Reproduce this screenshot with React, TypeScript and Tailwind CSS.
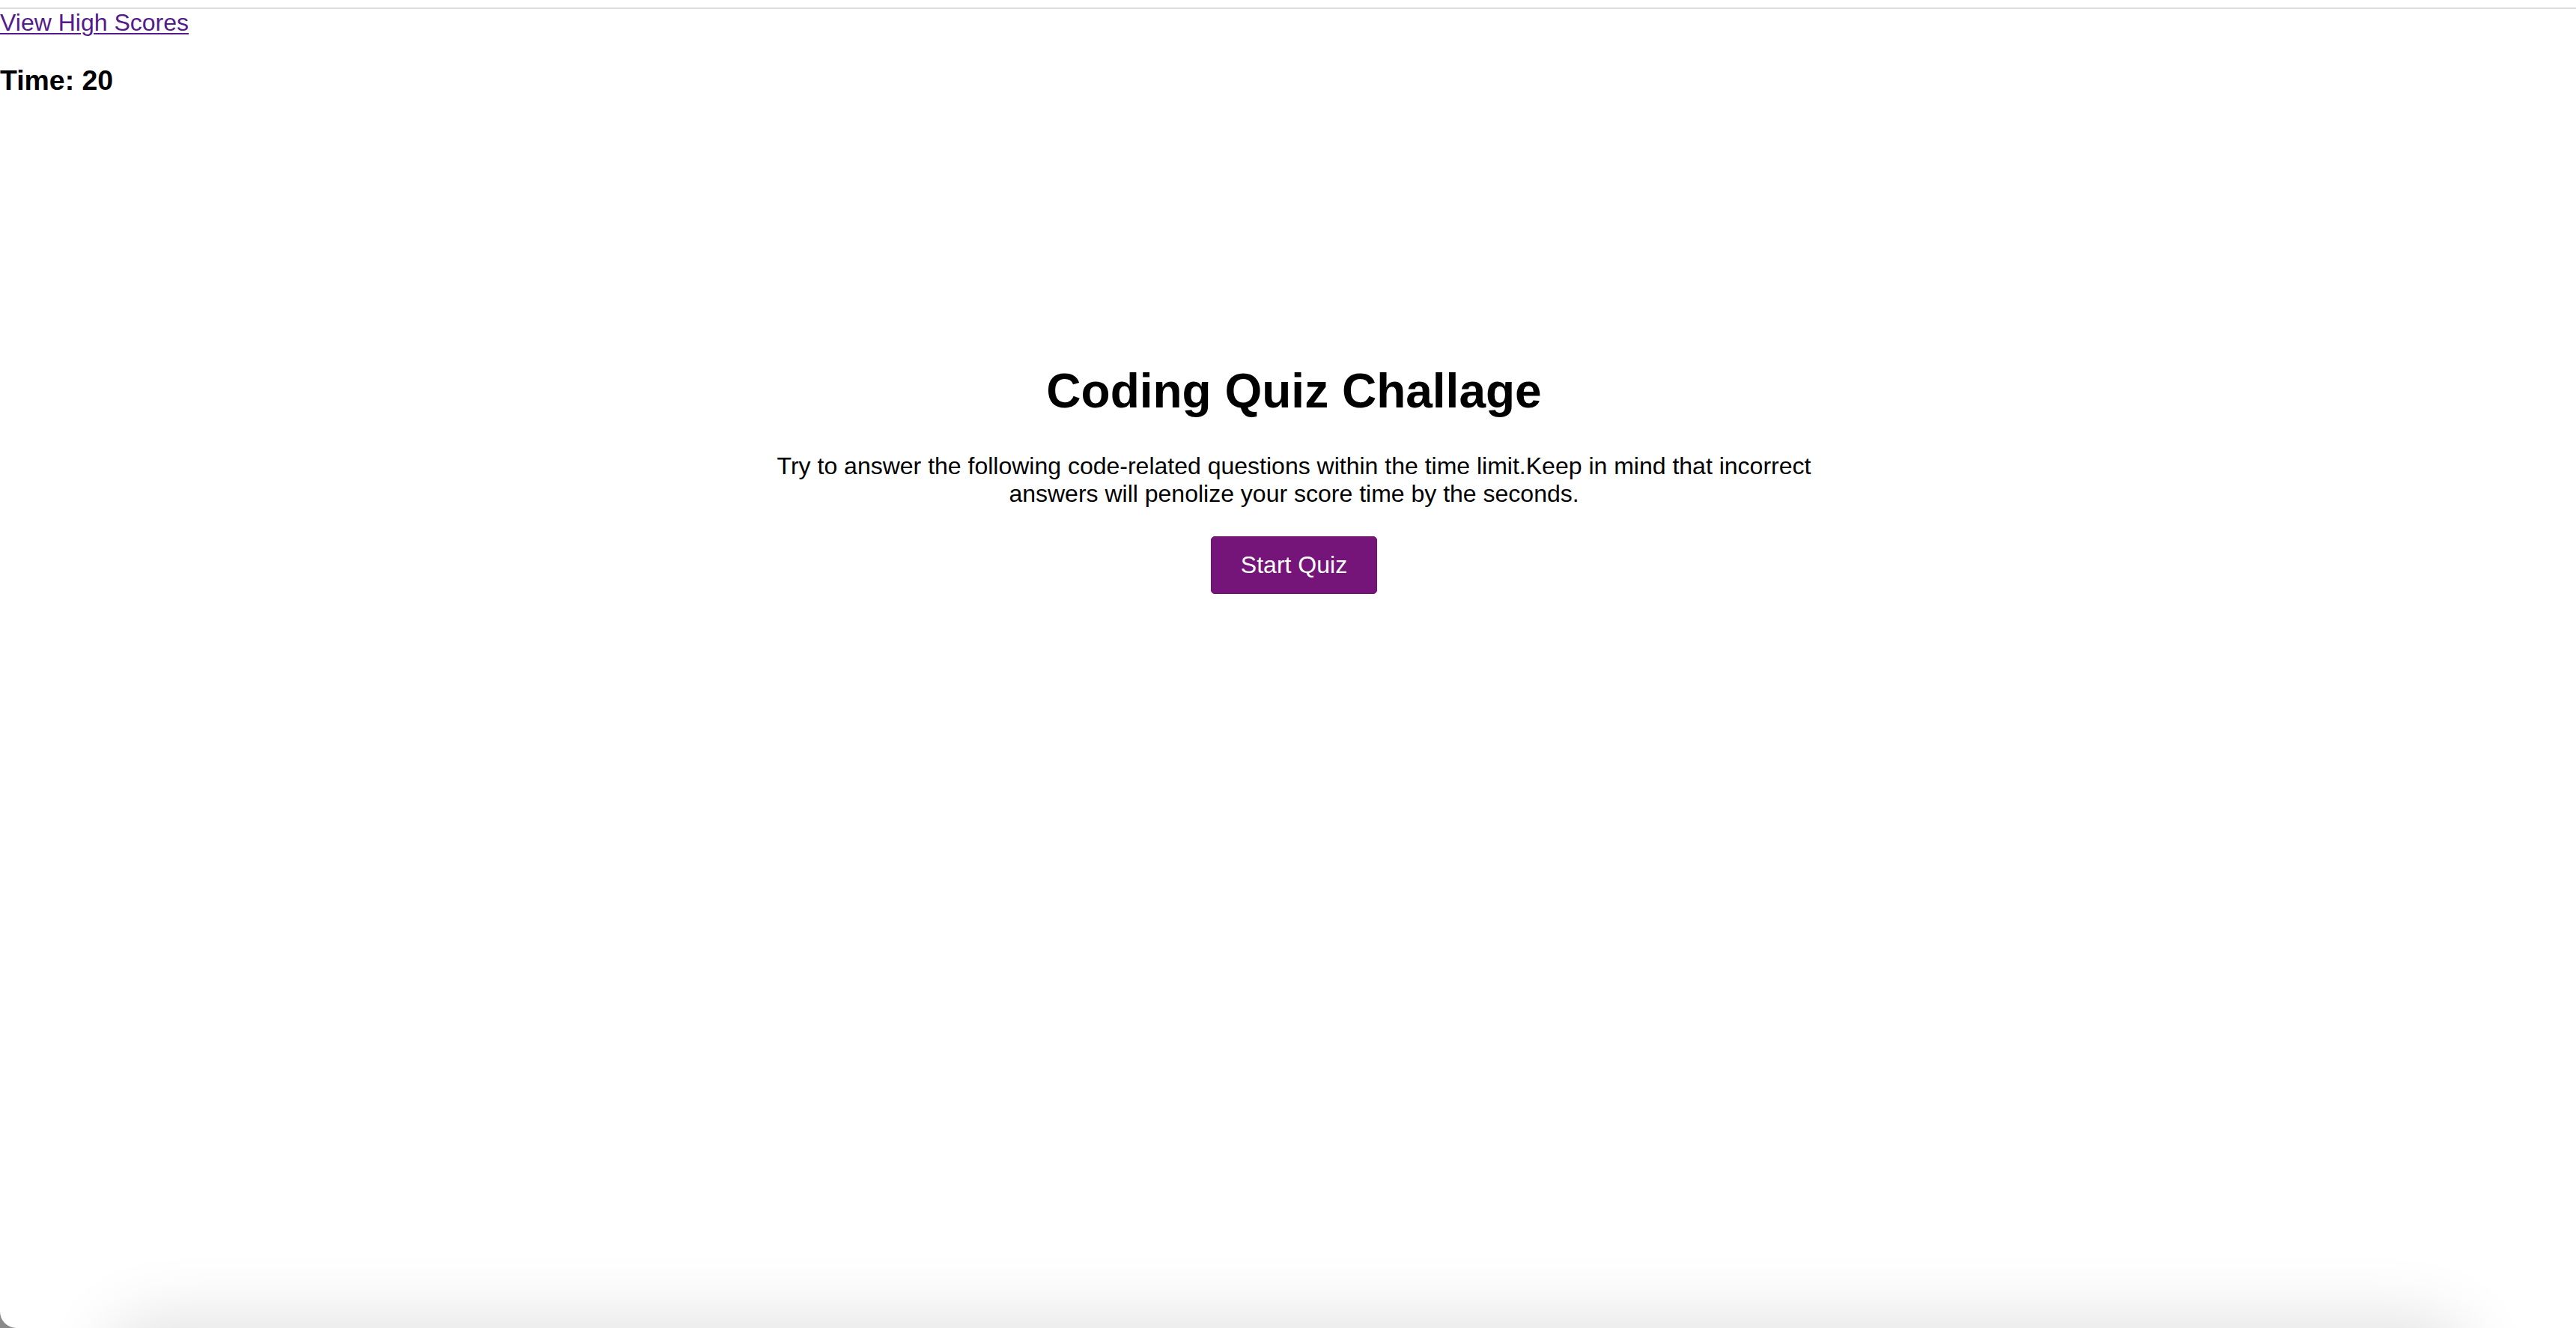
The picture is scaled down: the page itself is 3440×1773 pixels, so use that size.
export default function App() {
  return (
    <div className="relative h-[1773px] overflow-hidden bg-[#8a8a8a] font-['Liberation_Sans',Arial,sans-serif] text-black">
      <div className="h-full rounded-bl-[22px] bg-white">
        <div className="h-[10px] bg-white" />
        <div className="h-[2px] bg-[#dcdcdc]" />

        <header className="flex flex-col items-start">
          <a href="#" className="text-[32px] leading-[37px] text-[#551a8b] underline decoration-2 underline-offset-[3px]">
            View High Scores
          </a>
          <h3 className="my-[37px] text-[37.44px] font-bold leading-[43px]">Time: 20</h3>
        </header>

        <main className="flex justify-center pl-4 pt-[319px]">
          <div className="flex w-[1440px] flex-col items-center text-center">
            <h1 className="text-[64px] font-bold leading-[74px]">Coding Quiz Challage</h1>
            <p className="mt-[45px] text-[32px] leading-[37px]">
              Try to answer the following code-related questions within the time limit.Keep in mind that incorrect answers will penolize your score time by the seconds.
            </p>
            <button className="mt-[38px] h-[77px] w-[222px] rounded-[5px] border border-[#6e1172] bg-[#761579] text-[32px] leading-[37px] text-white">
              Start Quiz
            </button>
          </div>
        </main>
      </div>

      {/* shadow of the window below */}
      <div className="pointer-events-none absolute left-[180px] right-[180px] top-[1800px] h-[60px] rounded-full bg-black/20 shadow-[0_0_90px_40px_rgba(0,0,0,0.12)]" />
    </div>
  );
}
